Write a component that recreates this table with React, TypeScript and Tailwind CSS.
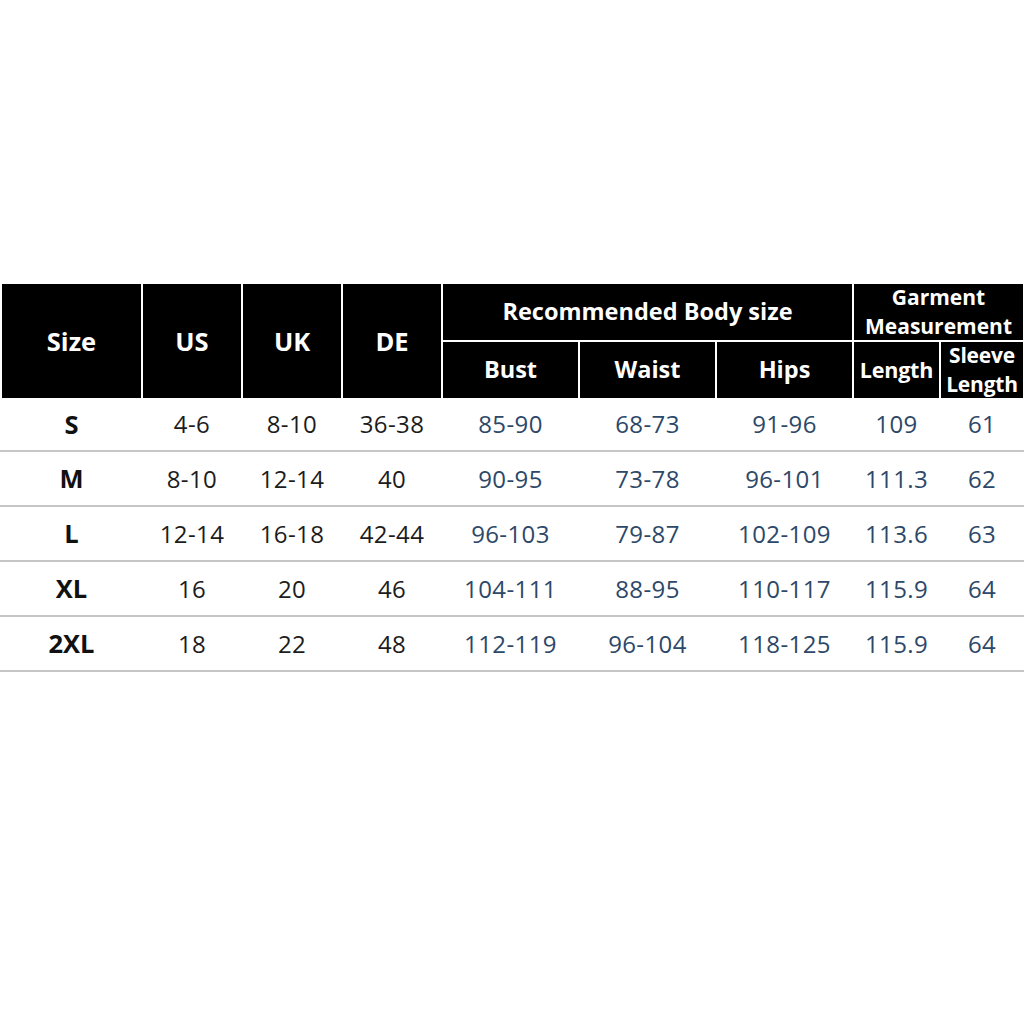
const COLS = "grid grid-cols-[139px_98px_98px_98px_135px_135px_135px_85px_82px] gap-x-[2px] pl-[2px]"

const ROWS = [
  ["S", "4-6", "8-10", "36-38", "85-90", "68-73", "91-96", "109", "61"],
  ["M", "8-10", "12-14", "40", "90-95", "73-78", "96-101", "111.3", "62"],
  ["L", "12-14", "16-18", "42-44", "96-103", "79-87", "102-109", "113.6", "63"],
  ["XL", "16", "20", "46", "104-111", "88-95", "110-117", "115.9", "64"],
  ["2XL", "18", "22", "48", "112-119", "96-104", "118-125", "115.9", "64"],
]

function HeadCell({ children, className = "" }: { children: React.ReactNode; className?: string }) {
  return (
    <div className={`bg-black text-white font-bold flex items-center justify-center text-center ${className}`}>
      {children}
    </div>
  )
}

export default function App() {
  return (
    <div className="w-[1024px] h-[1024px] bg-white pt-[284px] font-['Open_Sans',sans-serif]">
      {/* header */}
      <div className={`${COLS} grid-rows-[56px_56px] gap-y-[2px]`}>
        <HeadCell className="row-span-2 text-[25.5px]">Size</HeadCell>
        <HeadCell className="row-span-2 text-[25.5px]">US</HeadCell>
        <HeadCell className="row-span-2 text-[25.5px]">UK</HeadCell>
        <HeadCell className="row-span-2 text-[25.5px]">DE</HeadCell>
        <HeadCell className="col-span-3 text-[23.5px]">Recommended Body size</HeadCell>
        <HeadCell className="col-span-2 text-[21px] leading-[29px]">
          Garment
          <br />
          Measurement
        </HeadCell>
        <HeadCell className="text-[23.5px]">Bust</HeadCell>
        <HeadCell className="text-[23.5px]">Waist</HeadCell>
        <HeadCell className="text-[23.5px]">Hips</HeadCell>
        <HeadCell className="text-[21.5px] tracking-[-0.2px]">Length</HeadCell>
        <HeadCell className="text-[21px] leading-[29px] tracking-[-0.2px]">
          Sleeve
          <br />
          Length
        </HeadCell>
      </div>

      {/* body */}
      {ROWS.map((row, i) => (
        <div
          key={row[0]}
          className={`border-b-2 border-[#c6c6c6] ${i === 0 ? "h-[54px]" : "h-[55px]"}`}
        >
          <div className={`${COLS} h-full items-center text-[24px] tracking-[0.4px]`}>
            {row.map((v, j) => (
              <div
                key={j}
                className={`text-center ${
                  j === 0 ? "font-bold text-[25.5px] tracking-normal text-[#111]" : j < 4 ? "text-[#1c1c1c]" : "text-[#2d4868]"
                }`}
              >
                {v}
              </div>
            ))}
          </div>
        </div>
      ))}
    </div>
  )
}
